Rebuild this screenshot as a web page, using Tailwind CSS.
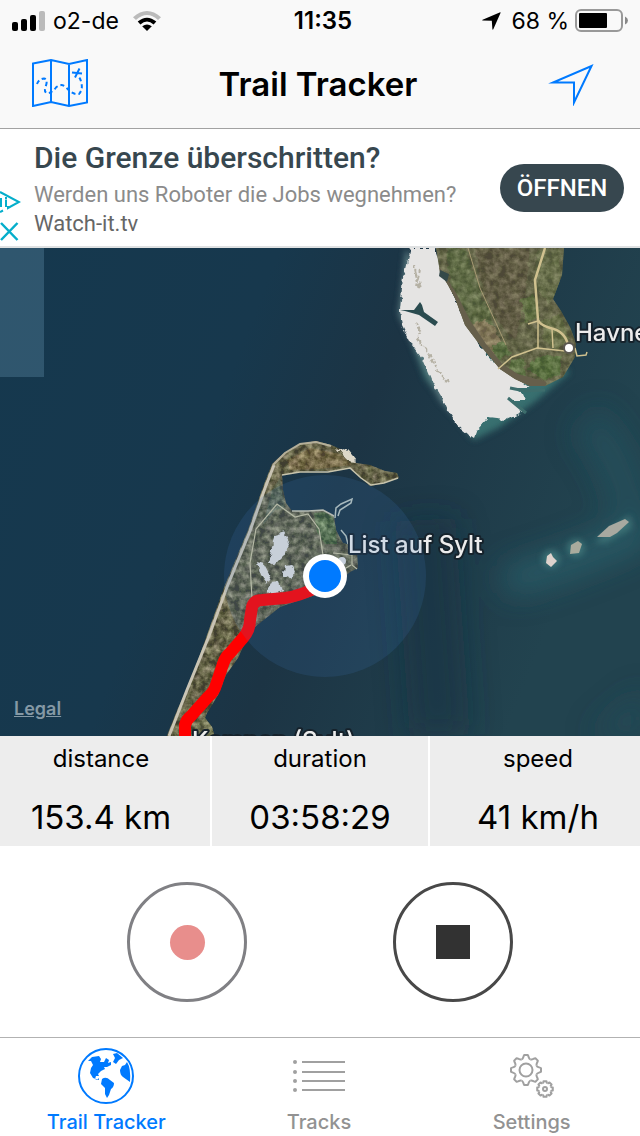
<!DOCTYPE html>
<html lang="en">
<head>
<meta charset="utf-8">
<meta name="viewport" content="width=device-width, initial-scale=1">
<title>Trail Tracker</title>
<script src="https://cdn.jsdelivr.net/npm/@tailwindcss/browser@4"></script>
</head>
<body class="flex min-h-screen flex-col bg-white font-['Inter',sans-serif] text-black">

<header class="border-b border-[#a2a2a2] bg-[#f9f9f9]">
  <!-- Status bar -->
  <div class="grid h-10 grid-cols-3 items-center px-3 pt-px text-[23px] leading-7">
    <div class="flex items-center gap-2">
      <svg class="h-5 w-[33px]" viewBox="0 0 33 20" aria-hidden="true">
        <rect x="0" y="11" width="6" height="9" rx="2"/><rect x="9" y="8" width="6" height="12" rx="2"/><rect x="18" y="4" width="6" height="16" rx="2"/><rect x="27" y="0" width="6" height="20" rx="2" fill="#bbb"/>
      </svg>
      <span class="whitespace-nowrap">o2-de</span>
      <svg class="ml-1.5 h-5 w-7" viewBox="0 0 28 20" aria-hidden="true">
        <path d="M0 6.300Q14-6.300 28 6.300L25 9Q14-.800 3 9Z" fill="#bbb"/>
        <path d="M4.700 10.600Q14 2.800 23.300 10.600L20.600 13.400Q14 7.800 7.400 13.400Z"/>
        <path d="M9.200 15.200Q14 11.600 18.800 15.200L14 20Z"/>
      </svg>
    </div>
    <div class="pl-1.5 text-center text-[24px] font-semibold">11:35</div>
    <div class="flex items-center justify-end gap-1.5">
      <svg class="mr-1 h-[18px] w-[19px]" viewBox="0 0 19 18" aria-hidden="true"><path d="M18.200.300Q18.800.300 18.500 1L11.300 17.300Q10.700 18.200 10.400 17.300L9.800 8.700.600 8.500Q-.300 8.100.600 7.700Z"/></svg>
      <span class="whitespace-nowrap">68 %</span>
      <svg class="h-[23px] w-[53px]" viewBox="0 0 53 23" aria-hidden="true">
        <rect x="1" y="1" width="46" height="21" rx="5" fill="none" stroke="#999" stroke-width="2"/>
        <rect x="4" y="4" width="28" height="15" rx="1"/><path d="M50 7.500q3 1.500 3 4t-3 4Z" fill="#888"/>
      </svg>
    </div>
  </div>
  <!-- Navigation bar -->
  <div class="flex h-22 items-center justify-between pr-[46px] pl-8">
    <button type="button" aria-label="Map" class="mb-0.5 h-12 w-14">
      <svg viewBox="0 0 56 48" class="h-12 w-14" fill="none" stroke="#007aff" stroke-width="2" aria-hidden="true">
        <path d="M1 4.500 19 1 37 5 55 1V43.500L37 47 19 43 1 47ZM19 1V43M37 5V47"/>
        <path d="M5 25Q7 20 12 19.500 16 20 14 26.500 11.500 32 14.500 34 19 35 24 28.500 29 24 34 28 40 36 47 35 51 30 49.500 25 49 20 46 17" stroke-dasharray="4 3"/>
        <path d="M40 13.500 50 14.500M47.500 9.500 43 18.500"/>
      </svg>
    </button>
    <h1 class="text-[33px] leading-10 font-semibold whitespace-nowrap">Trail Tracker</h1>
    <button type="button" aria-label="Locate me" class="h-11 w-[46px]">
      <svg viewBox="0 0 46 44" class="h-11 w-[46px]" fill="none" stroke="#007aff" stroke-width="2" aria-hidden="true"><path d="M43.500 4 26 40.500V20.500H5Z" stroke-miterlimit="6"/></svg>
    </button>
  </div>
</header>

<main class="flex grow flex-col">
  <!-- Advertisement -->
  <aside class="flex items-center border-b-2 border-[#dfe1e2] pr-4 font-['Roboto',sans-serif]">
    <div class="flex w-[34px] shrink-0 flex-col gap-2 self-end pb-1">
      <a href="#" aria-label="Ad choices"><svg class="h-6 w-[21px]" viewBox="0 0 21 24" fill="none" stroke="#05aecb" stroke-width="2" aria-hidden="true"><path d="M0 2 19 12 8 18V16M0 22 3 20.500M1 8V17M5 10.500H6V17M6 7V9"/></svg></a>
      <button type="button" aria-label="Close ad" class="h-5 w-5"><svg class="h-5 w-5" viewBox="0 0 20 20" stroke="#05aecb" stroke-width="2.500" aria-hidden="true"><path d="M1 1 17.500 18M17.500 1 1 18"/></svg></button>
    </div>
    <div class="grow pt-3 pb-2.5 whitespace-nowrap">
      <h2 class="text-[30px] leading-[34px] font-medium text-[#37474f]">Die Grenze überschritten?</h2>
      <p class="pt-1 text-[22px] leading-8 text-[#8b8b8b]">Werden uns Roboter die Jobs wegnehmen?</p>
      <p class="text-[22px] leading-[25px] text-[#666]">Watch-it.tv</p>
    </div>
    <a href="#" class="flex h-12 w-31 shrink-0 items-center justify-center rounded-full bg-[#37474f] text-[24px] leading-7 font-medium text-white">ÖFFNEN</a>
  </aside>

  <!-- Map -->
  <section class="relative min-h-[488px] grow bg-[#1b3a50]" aria-label="Map">
    <svg class="absolute inset-0 h-full w-full" viewBox="0 248 640 488" preserveAspectRatio="xMidYMid slice" role="img" aria-label="Satellite map of Sylt with recorded trail">
      <defs>
        <linearGradient id="sea" x1="0" y1="0" x2="1" y2=".3"><stop offset="0" stop-color="#15384e"/><stop offset=".4" stop-color="#17384d"/><stop offset=".62" stop-color="#1c3444"/><stop offset="1" stop-color="#22434f"/></linearGradient>
        <filter id="grain" x="0" y="0" width="1" height="1" color-interpolation-filters="sRGB">
          <feTurbulence type="fractalNoise" baseFrequency=".15" numOctaves="4" seed="6" result="n"/>
          <feColorMatrix in="n" values="1.800 .2 0 0 -.62  1.700 .3 0 0 -.62  1.600 .1 0 0 -.6  0 0 0 0 .4" result="c"/>
          <feComposite in="c" in2="SourceGraphic" operator="in" result="t"/>
          <feMerge><feMergeNode in="SourceGraphic"/><feMergeNode in="t"/></feMerge>
        </filter>
        <filter id="rough" x="-.1" y="-.1" width="1.200" height="1.200" color-interpolation-filters="sRGB"><feTurbulence type="fractalNoise" baseFrequency=".15" numOctaves="2" seed="3"/><feDisplacementMap in="SourceGraphic" scale="7" xChannelSelector="R" yChannelSelector="G"/><feGaussianBlur stdDeviation=".7"/></filter>
        <filter id="soft" x="-.5" y="-.5" width="2" height="2"><feGaussianBlur stdDeviation="15"/></filter>
        <filter id="edge" x="-.2" y="-.2" width="1.400" height="1.400"><feGaussianBlur stdDeviation="3"/></filter>
        <filter id="fine"><feGaussianBlur stdDeviation=".6"/></filter>
        <clipPath id="east"><path d="M436 248H564L562 275 553 299 561 311 570 327 576 343 575 357 563 377 545 386 530 386 515 379 500 369 480 345 465 325 455 298 448 285 440 272Z"/></clipPath>
      </defs>
      <rect y="248" width="640" height="488" fill="url(#sea)"/>
      <g filter="url(#soft)" fill="none">
        <path d="M505 582Q570 565 645 530" stroke="#2c6b74" stroke-width="30" opacity=".6"/>
        <path d="M585 420Q625 460 635 530" stroke="#2a5c68" stroke-width="40" opacity=".4"/>
        <path d="M425 520 440 736" stroke="#1b3240" stroke-width="60" opacity=".5"/>
        <path d="M590 736H645V690Z" fill="#27505b" opacity=".6"/>
      </g>
      <!-- Rømø -->
      <g filter="url(#edge)">
        <path d="M398 305 425 378 474 440 500 427 535 402 570 372 560 365 500 360Z" fill="#37706f"/>
        <path d="M406 248 399 315 440 400 474 438 450 330Z" fill="#5f7f84"/>
      </g>
      <path d="M410 248 403 278 400 310 402 325 412 345 422 359 430 378 443 399 450 414 457 425 468 434 474 438 477 430 488 418 504 420 523 411 512 400 525 400 522 393 512 388 530 388 515 377 495 363 478 345 460 310 448 285 436 248Z" fill="#e5e4e3" filter="url(#rough)"/>
      <g clip-path="url(#east)">
        <rect x="430" y="248" width="150" height="142" fill="#62674a"/>
        <g opacity=".7" filter="url(#rough)">
          <path d="M446 248H466L480 290 505 350 495 362 470 325 450 288Z" fill="#587a45"/>
          <path d="M483 318 496 328 506 350 493 358 472 325Z" fill="#b99a7a"/>
          <path d="M470 312 482 306 490 317 481 323Z" fill="#507539"/>
          <path d="M492 346 503 340 511 353 499 361Z" fill="#4b8739"/>
          <path d="M475 248H530L525 300 515 340 498 322 482 290Z" fill="#5d5140"/>
          <path d="M520 300 533 294 540 318 525 322Z" fill="#5f8a40"/>
          <path d="M536 250 560 248 560 290 548 303 536 285Z" fill="#6d8150"/>
          <path d="M542 320 560 315 570 340 555 350 543 340Z" fill="#6f8849"/>
          <path d="M535 358 562 355 560 375 545 380 528 370Z" fill="#478a35"/>
          <path d="M510 360 524 358 526 376 512 374Z" fill="#4e873a"/>
        </g>
        <rect x="430" y="248" width="150" height="142" fill="#6b6a4f" opacity=".55" filter="url(#grain)"/>
        <path d="M436 270 452 295 467 324 482 346 500 368 516 378 545 386" fill="none" stroke="#665f4c" stroke-width="9" filter="url(#fine)"/>
        <path d="M468 248 480 288 506 345" fill="none" stroke="#a69a73"/>
      </g>
      <g fill="none" stroke="#d0c18f" stroke-width="1.500">
        <path d="M545 248 535 280 538 320Q540 325 550 328 565 331 568 345" stroke-width="2.500"/>
        <path d="M498 369 512 357 537 348 565 351M538 322V348M552 329 553 348M528 324 538 321M575 348 577 356 586 355 587 352"/>
      </g>
      <path d="M400 310 414 310 420 302 422 305 424 312 438 322 435 326 419 315 405 311Z" fill="#2b4b50" filter="url(#fine)"/>
      <path d="M440 270 449 274 447 282 439 276Z" fill="#35484a" filter="url(#fine)"/>
      <path d="M415 323 422 331 417 338 430 355 438 370 448 384M414 265 420 290M420 270 416 285" fill="none" stroke="#b5b1a4" stroke-width="2" stroke-dasharray="3 2 6 2" filter="url(#rough)"/>
      <path d="M510 388 525 391 545 390M508 398 526 413" fill="none" stroke="#3d6d6c" stroke-width="3" filter="url(#fine)"/>

      <!-- Sandbanks -->
      <g filter="url(#edge)" fill="#4e8988" opacity=".6"><circle cx="551" cy="559" r="9"/><circle cx="576" cy="548" r="9"/><path d="M594 542 630 515 632 528 605 543Z"/></g>
      <g filter="url(#fine)"><path d="M547 556 551 553 553 557 557 561 551 567 546 563Z" fill="#ddd2cc"/><path d="M571 545 578 541 582 544 579 553 570 554Z" fill="#a9ab9d"/><path d="M597 537 609 526 625 519 629 522 617 533 610 537Z" fill="#a8a9a0"/></g>

      <!-- Sylt -->
      <g filter="url(#grain)">
        <path d="M166 738 178 708 188 688 207 635 225 585 248 530 263 487 272 464 284 453 300 444 316 441 331 445 345 451 356 463 370 465 385 471 397 473 399 478 380 484 370 486 360 477 350 468 335 471 315 471 300 472 282 475 283 490 286 503 292 511 310 511 323 510 334 516 336 530 343 543 350 545 357 552 358 568 350 572 325 592 300 600 280 607 270 615 256 626 248 636 238 658 226 675 218 695 207 713 205 718 212 727 215 738Z" fill="#6b6851"/>
        <path d="M314 513 325 512 333 517 336 530 337 544 325 544 317 532Z" fill="#5d7d49"/>
        <path d="M280 478 285 508 275 510 263 525 272 490Z" fill="#637060"/>
        <path d="M287 460 310 448 340 454 352 465 320 469 290 470Z" fill="#83704f"/>
        <path d="M205 718 212 727 215 738H190L197 724Z" fill="#7c805f"/>
      </g>
      <path d="M169 736 187 690 209 636 227 587 250 531 265 488 274 465" fill="none" stroke="#c9c4b4" stroke-width="3" filter="url(#fine)"/>
      <path d="M273 465 285 453 300 444 316 442 331 446" fill="none" stroke="#b5af99" stroke-width="2" filter="url(#fine)"/>
      <path d="M336 447 348 451 357 462 348 461Z" fill="#ddd8c9" filter="url(#rough)"/>
      <path d="M282 475 300 472 328 472 350 468 361 478 371 485 384 483 398 478M292 511 308 511 323 510 334 516" fill="none" stroke="#c8c4ad" stroke-width="1.500" filter="url(#fine)"/>
      <path d="M335 518 336 508 341 504 352 499 351 503 340 510 338 516M341 530 346 536 348 544" fill="none" stroke="#b9c3bb" stroke-width="1.500"/>
      <g fill="#dedddb" filter="url(#rough)"><path d="M274 535 284 532 289 541 284 556 275 565 268 562 272 548Z"/><path d="M284 565 292 564 296 573 290 578 283 575Z"/><path d="M257 562 264 564 271 577 267 584 261 576Z"/><path d="M271 583 279 582 282 591 272 595 267 590Z"/></g>
      <path d="M252 598 250 563 256 529 277 504 295 517 308 514 319 529 323 555M333 553 352 555 352 565 357 569M346 568 351 565" fill="none" stroke="#c9c3a0" stroke-width="1.200"/>

      <!-- Place names -->
      <g font-family="Inter, sans-serif" font-size="24" font-weight="500" fill="#ececec" stroke="#16222b" stroke-width="4" stroke-linejoin="round" paint-order="stroke">
        <text x="575" y="341">Havneby</text>
        <text x="348" y="553">List auf Sylt</text>
        <text x="192" y="749">Kampen (Sylt)</text>
      </g>
      <circle cx="569" cy="348" r="5" fill="#fff" stroke="#5b5851" stroke-width="2"/>
      <circle cx="342" cy="561" r="4" fill="#ddd"/>

      <!-- Trail and position -->
      <path d="M185 742V725Q186 720 191 716L208 697Q214 692 216 685L223 664Q225 657 230 653L243 638Q250 630 250 620L252 607Q254 600 262 600L285 598Q300 596 320 586" fill="none" stroke="#f00" stroke-width="12" stroke-linejoin="round"/>
      <circle cx="325" cy="576" r="101" fill="#4682c8" opacity=".15"/>
      <circle cx="325" cy="576" r="22" fill="#fff"/><circle cx="325" cy="576" r="16" fill="#007aff"/>
    </svg>
    <div class="absolute top-0 left-0 h-[129px] w-11 bg-[#6c9abb]/30"></div>
    <a href="#" class="absolute bottom-[15px] left-3.5 text-[18px] leading-6 font-semibold text-[#8599a5] underline">Legal</a>
  </section>

  <!-- Statistics -->
  <dl class="grid grid-cols-[210fr_216fr_210fr] gap-0.5 text-center whitespace-nowrap">
    <div class="h-[110px] bg-[#ededed] pt-[9px] pr-2"><dt class="text-[24px] leading-7">distance</dt><dd class="pt-6 text-[33px] leading-10">153.4 km</dd></div>
    <div class="h-[110px] bg-[#ededed] pt-[9px]"><dt class="text-[24px] leading-7">duration</dt><dd class="pt-6 text-[33px] leading-10">03:58:29</dd></div>
    <div class="h-[110px] bg-[#ededed] pt-[9px] pl-1.5"><dt class="text-[24px] leading-7">speed</dt><dd class="pt-6 text-[33px] leading-10">41 km/h</dd></div>
  </dl>

  <!-- Recorder controls -->
  <div class="flex justify-center gap-[146px] pt-9 pb-[35px]">
    <button type="button" aria-label="Record" class="flex size-30 items-center justify-center rounded-full border-[3px] border-[#808084]"><span class="size-[35px] rounded-full bg-[#e88e8c]"></span></button>
    <button type="button" aria-label="Stop" class="flex size-30 items-center justify-center rounded-full border-[3px] border-[#484848]"><span class="size-[34px] bg-[#323232]"></span></button>
  </div>
</main>

<nav class="grid h-[99px] grid-cols-3 border-t border-[#b2b2b2] pr-0.5 text-[20px] leading-6 font-medium text-[#929292]">
  <a href="#" aria-current="page" class="flex flex-col items-center gap-1.5 pt-2.5 text-[#007aff]">
    <svg class="size-14" viewBox="0 0 56 56" fill="currentColor" aria-hidden="true">
      <circle cx="28" cy="28" r="27" fill="none" stroke="currentColor" stroke-width="2"/>
      <path d="M10 13 14 9 21 8 23 11 22 14 26 14 28 10 31 12 30 15 33 14 33 17 29 19 26 19 27 21 23 23 20 26 21 28 18 28 17 31 19 32 21 30 21 32 15 30 12 25 13 20 15 17 13 13Z"/>
      <path d="M35 6 39 5 45 10 41 12 38 16 35 14 37 10ZM49 14Q53 20 52 34L45 29Q42 27 42 22L44 18 47 17Z"/>
      <path d="M24 31Q28 28 32 32L36 35Q36 39 33 41L31 47 29 50 27 46 27 40 23 36Z"/>
    </svg>
    <span>Trail Tracker</span>
  </a>
  <a href="#" class="flex flex-col items-center gap-1.5 pt-2.5">
    <svg class="size-14" viewBox="0 0 56 56" fill="none" stroke="#a0a0a0" stroke-width="2" aria-hidden="true">
      <path d="M11 14H54M11 24H54M11 33H54M11 42H54"/><path d="M4 14h0M4 24h0M4 33h0M4 42h0" stroke-width="4" stroke-linecap="round"/>
    </svg>
    <span>Tracks</span>
  </a>
  <a href="#" class="flex flex-col items-center gap-1.5 pt-2.5">
    <svg class="size-14" viewBox="0 0 56 56" fill="none" stroke="#a0a0a0" stroke-width="2" stroke-linejoin="round" aria-hidden="true">
      <defs>
        <path id="t" d="M-4.400-10.600C-2.300-11.500-3-13.500-1.700-15H1.700C3-13.500 2.300-11.500 4.400-10.600"/>
        <path id="s" d="M-2.500-6-1.700-6.400-1.500-7.800H1.500L1.700-6.400 2.500-6"/>
      </defs>
      <g transform="translate(22 22)"><circle r="6.500"/><use href="#t"/><use href="#t" transform="rotate(45)"/><use href="#t" transform="rotate(90)"/><use href="#t" transform="rotate(135)"/><use href="#t" transform="rotate(180)"/><use href="#t" transform="rotate(225)"/><use href="#t" transform="rotate(270)"/><use href="#t" transform="rotate(315)"/></g>
      <g transform="translate(41 41)"><circle r="2"/><use href="#s"/><use href="#s" transform="rotate(45)"/><use href="#s" transform="rotate(90)"/><use href="#s" transform="rotate(135)"/><use href="#s" transform="rotate(180)"/><use href="#s" transform="rotate(225)"/><use href="#s" transform="rotate(270)"/><use href="#s" transform="rotate(315)"/></g>
    </svg>
    <span>Settings</span>
  </a>
</nav>
</body>
</html>
